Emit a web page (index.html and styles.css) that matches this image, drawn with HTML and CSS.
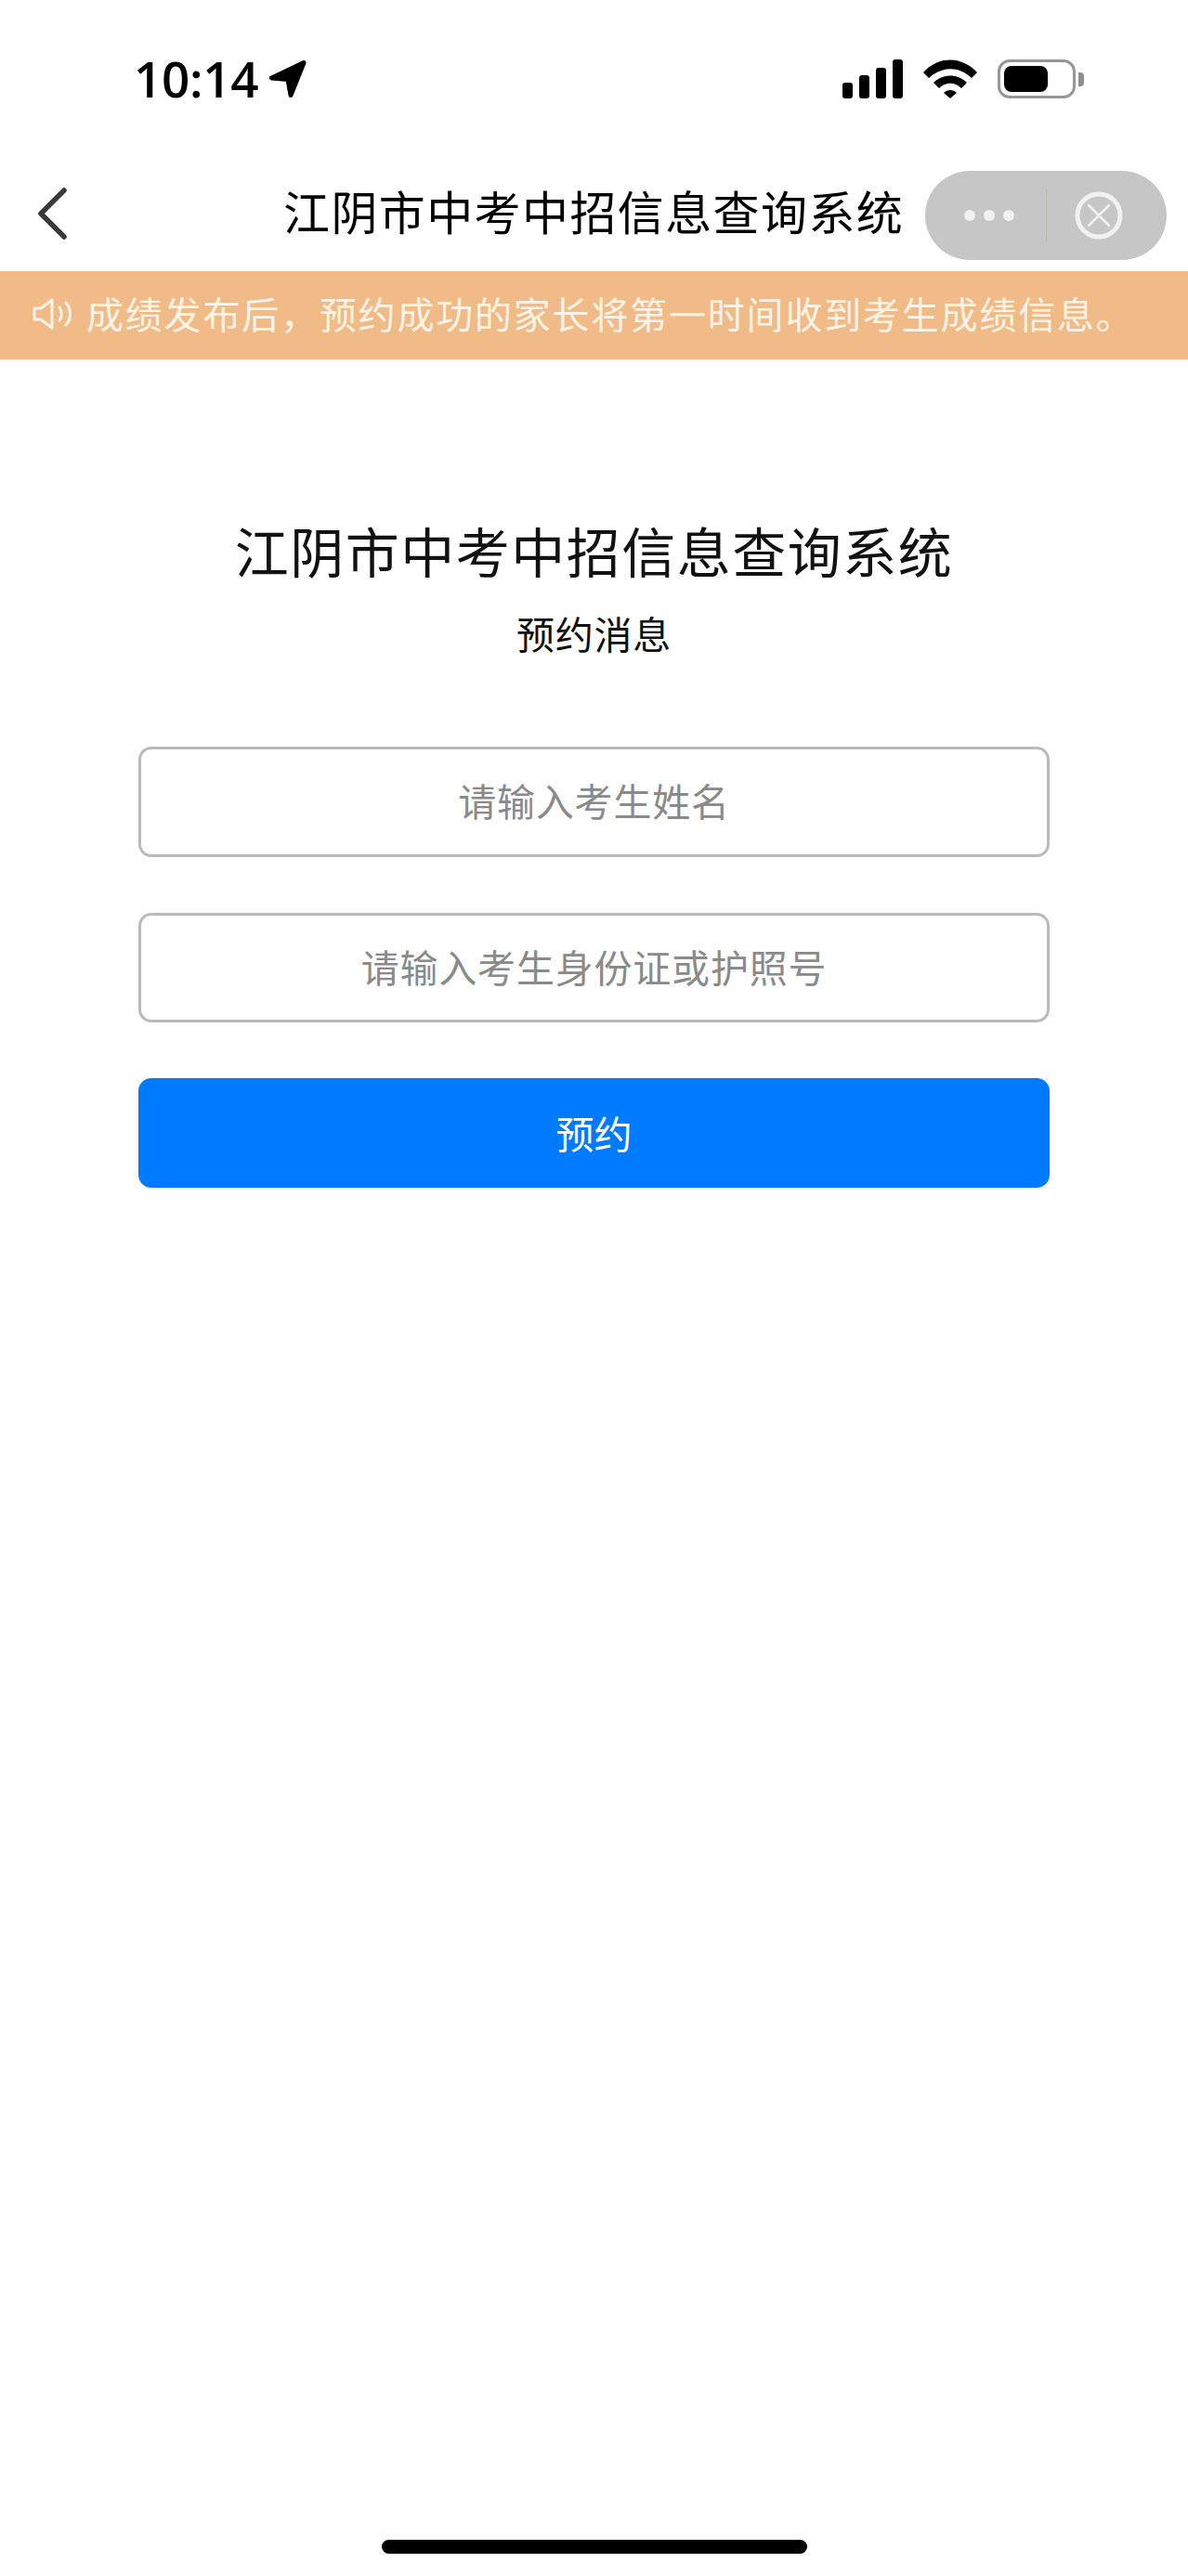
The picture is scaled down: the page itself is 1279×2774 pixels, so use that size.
FILE: index.html
```html
<!DOCTYPE html>
<html lang="zh-CN">
<head>
    <meta charset="UTF-8">
    <title>江阴市中考中招信息查询系统</title>
    <link rel="stylesheet" href="styles.css">
</head>
<body>
    <div class="status-bar">
        <div class="status-left">
            <span class="clock">10:14</span>
            <svg class="loc-icon" width="42" height="42" viewBox="0 0 42 42">
                <path d="M38 3.500 3.500 20 21 21.500 24 38.500Z" fill="#000" stroke="#000" stroke-width="5" stroke-linejoin="round"/>
            </svg>
        </div>
        <div class="status-right">
            <div class="signal">
                <i class="bar1"></i><i class="bar2"></i><i class="bar3"></i><i class="bar4"></i>
            </div>
            <svg class="wifi" width="58" height="42" viewBox="0 0 58 42">
                <path d="M0 14C17 -4 41 -4 58 14L52 20C38.500 7 19.500 7 6 20Z" fill="#000"/>
                <path d="M11 25C21 15 37 15 47 25L41 31C34 24 24 24 17 31Z" fill="#000"/>
                <path d="M22 36C26 32 32 32 36 36L29 42Z" fill="#000"/>
            </svg>
            <div class="battery">
                <div class="battery-level"></div>
            </div>
            <div class="battery-tip"></div>
        </div>
    </div>

    <div class="nav-bar">
        <svg class="back" width="34" height="58" viewBox="0 0 34 58">
            <path d="M29 3 4 28 29 53" fill="none" stroke="#3a3a3a" stroke-width="5.500" stroke-linecap="round" stroke-linejoin="round"/>
        </svg>
        <div class="nav-title">江阴市中考中招信息查询系统</div>
        <div class="capsule">
            <div class="dots"><i></i><i></i><i></i></div>
            <div class="capsule-line"></div>
            <svg class="capsule-close" width="52" height="52" viewBox="0 0 52 52">
                <circle cx="26" cy="26" r="23" fill="none" stroke="#f1f1f1" stroke-width="5"/>
                <path d="M15 15 37 37M37 15 15 37" stroke="#f1f1f1" stroke-width="2.500" stroke-linecap="round"/>
            </svg>
        </div>
    </div>

    <div class="notice">
        <svg class="speaker" width="44" height="34" viewBox="0 0 44 34">
            <path d="M2 11H9L21 2V32L9 23H2Z" fill="none" stroke="#fdf3e6" stroke-width="3" stroke-linejoin="round"/>
            <path d="M29 10C32 14 32 20 29 24M36 5C42 12 42 22 36 29" fill="none" stroke="#fdf3e6" stroke-width="3" stroke-linecap="round"/>
        </svg>
        <span class="notice-text">成绩发布后，预约成功的家长将第一时间收到考生成绩信息。</span>
    </div>

    <div class="content">
        <h1>江阴市中考中招信息查询系统</h1>
        <p class="sub">预约消息</p>
        <input class="field" type="text" placeholder="请输入考生姓名">
        <input class="field" type="text" placeholder="请输入考生身份证或护照号">
        <button class="submit">预约</button>
    </div>

    <div class="home-bar"></div>
</body>
</html>
```

FILE: styles.css
```css
* { box-sizing: border-box; }
html, body { height: 100%; }
body { margin: 0; background: #fff; color: #000; font-family: "Noto Sans CJK SC", "Noto Sans", sans-serif; display: flex; flex-direction: column; }

.status-bar { height: 170px; flex: none; display: flex; justify-content: space-between; align-items: flex-start; padding: 55px 0 0 144px; }
.status-left { display: flex; align-items: center; gap: 11px; height: 60px; }
.clock { font-family: "Open Sans", sans-serif; font-size: 53px; font-weight: 600; line-height: 60px; letter-spacing: -0.3px; }
.status-right { display: flex; align-items: center; height: 60px; padding-right: 112px; }
.signal { display: flex; align-items: flex-end; gap: 7px; height: 42px; }
.signal i { display: block; width: 11px; background: #000; border-radius: 3px; }
.bar1 { height: 17px; }
.bar2 { height: 25px; }
.bar3 { height: 33px; }
.bar4 { height: 42px; }
.wifi { margin-left: 22px; }
.battery { width: 84px; height: 42px; margin-left: 22px; border: 3px solid #979797; border-radius: 13px; padding: 4px; }
.battery-level { width: 47px; height: 100%; background: #000; border-radius: 8px; }
.battery-tip { width: 6px; height: 15px; margin-left: 3px; background: #8e8e8e; border-radius: 0 4px 4px 0; }

.nav-bar { height: 122px; flex: none; position: relative; display: flex; align-items: center; padding: 0 0 0 40px; }
.back { flex: none; }
.nav-title { position: absolute; left: 305px; top: 0; font-size: 50px; line-height: 112px; letter-spacing: 1.4px; white-space: nowrap; }
.capsule { position: absolute; left: 996px; top: 14px; width: 260px; height: 96px; border-radius: 48px; background: #c6c6c6; display: flex; align-items: center; }
.dots { width: 130px; display: flex; justify-content: center; gap: 9px; padding-left: 8px; }
.dots i { display: block; width: 12px; height: 12px; border-radius: 50%; background: #f1f1f1; }
.capsule-line { width: 1px; height: 56px; background: #b9b9b3; }
.capsule-close { margin-left: 30px; }

.notice { height: 95px; flex: none; background: #f0bb87; color: #fdf3e6; display: flex; align-items: center; padding-left: 35px; gap: 14px; font-size: 40px; white-space: nowrap; letter-spacing: 1.8px; }
.speaker { flex: none; margin-top: -3px; }
.notice-text { line-height: 90px; margin-bottom: 5px; }

.content { flex: 1; display: flex; flex-direction: column; align-items: center; padding-top: 170px; }
.content h1 { margin: 0; font-size: 58px; font-weight: 400; line-height: 70px; letter-spacing: 1.5px; color: #111; }
.sub { margin: 29px 0 0; font-size: 41px; line-height: 50px; letter-spacing: 0.8px; color: #111; }
.field { width: 981px; height: 118.5px; margin-bottom: 60px; padding: 0 0 4px; border: 3px solid #bababa; border-radius: 14px; background: #fff; text-align: center; font-family: inherit; font-size: 41px; letter-spacing: 0.8px; outline: none; }
.sub + .field { margin-top: 98px; }
.field::placeholder { color: #8a8a8a; opacity: 1; }
.submit { width: 981px; height: 118px; padding: 0 0 2px; border: 0; border-radius: 14px; background: #007aff; color: #fff; font-family: inherit; font-size: 41px; }

.home-bar { position: absolute; left: 411px; top: 2735px; width: 458px; height: 15px; background: #000; border-radius: 8px; }
```
